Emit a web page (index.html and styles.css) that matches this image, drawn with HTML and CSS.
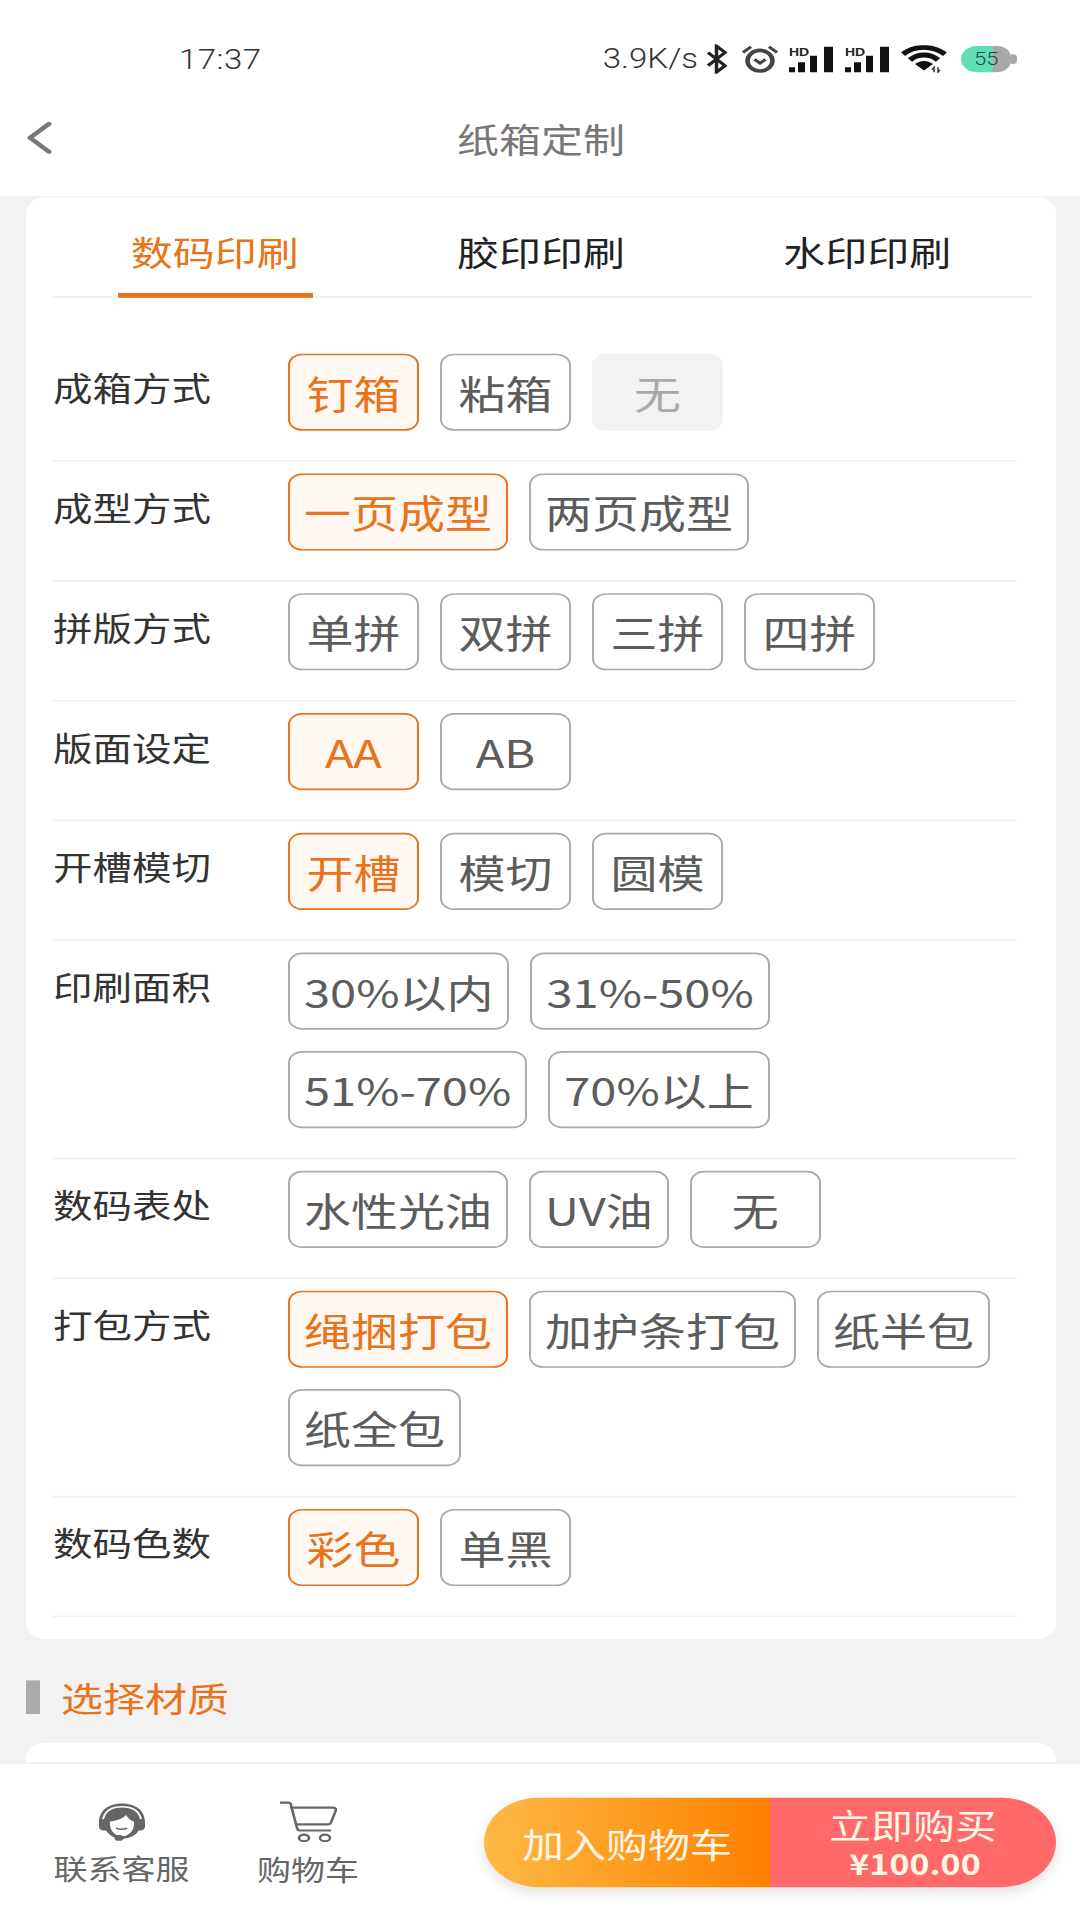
FILE: index.html
```html
<!DOCTYPE html>
<html lang="zh-CN">
<head>
<meta charset="utf-8">
<title>纸箱定制</title>
<link rel="stylesheet" href="styles.css">
</head>
<body>
<div class="frame">
<div class="stage">
  <header class="header">
    <div class="status">
      <span class="time">17:37</span>
      <div class="status-right">
        <span class="speed">3.9K/s</span>
        <svg class="ic-bt" viewBox="0 0 24 36"><path d="M3 10 20 26 11.500 34V2L20 10 3 26" fill="none" stroke="#222" stroke-width="3.500"/></svg>
        <svg class="ic-alarm" viewBox="0 0 38 34"><circle cx="19" cy="19" r="12.500" fill="none" stroke="#444" stroke-width="4.500"/><path d="M13.500 17.500 19 22l5.500-4.500" fill="none" stroke="#444" stroke-width="3.500"/><path d="M2 9 10 2M36 9 28 2" stroke="#444" stroke-width="3.500"/></svg>
        <svg class="ic-sig" viewBox="0 0 46 32"><text class="hd" x="0" y="12">HD</text><path d="M0 26h6v6H0zM9 20h7v12H9zM21 12h7v20h-7zM35 1h9v31h-9z" fill="#111"/></svg>
        <svg class="ic-sig" viewBox="0 0 46 32"><text class="hd" x="0" y="12">HD</text><path d="M0 26h6v6H0zM9 20h7v12H9zM21 12h7v20h-7zM35 1h9v31h-9z" fill="#111"/></svg>
        <svg class="ic-wifi" viewBox="0 0 46 34"><path d="M2 11C14 0 31 0 44 11M9 18C17 10 29 10 37 18" fill="none" stroke="#111" stroke-width="6"/><path d="M14 23C20 18 26 18 32 23L23 31Z" fill="#111"/><path d="M33 33v-6l-2 3M37 27v6l2-3" fill="none" stroke="#333" stroke-width="1.500"/></svg>
        <div class="battery"><span class="batt-body">55</span><span class="batt-tip"></span></div>
      </div>
    </div>
    <div class="nav">
      <svg class="back" viewBox="0 0 26 40"><path d="M23 3 4 20l19 17" fill="none" stroke="#777" stroke-width="5" stroke-linecap="round" stroke-linejoin="round"/></svg>
      <span class="title">纸箱定制</span>
    </div>
  </header>

  <main class="content">
    <section class="card">
      <div class="tabs">
        <div class="tab tab-on">数码印刷</div>
        <div class="tab">胶印印刷</div>
        <div class="tab">水印印刷</div>
      </div>
      <div class="rows">
        <div class="row"><div class="label">成箱方式</div><div class="opts"><span class="opt on">钉箱</span><span class="opt">粘箱</span><span class="opt off">无</span></div></div>
        <div class="row"><div class="label">成型方式</div><div class="opts"><span class="opt on">一页成型</span><span class="opt">两页成型</span></div></div>
        <div class="row"><div class="label">拼版方式</div><div class="opts"><span class="opt">单拼</span><span class="opt">双拼</span><span class="opt">三拼</span><span class="opt">四拼</span></div></div>
        <div class="row"><div class="label">版面设定</div><div class="opts"><span class="opt on">AA</span><span class="opt">AB</span></div></div>
        <div class="row"><div class="label">开槽模切</div><div class="opts"><span class="opt on">开槽</span><span class="opt">模切</span><span class="opt">圆模</span></div></div>
        <div class="row"><div class="label">印刷面积</div><div class="opts"><span class="opt">30%以内</span><span class="opt">31%-50%</span><span class="opt">51%-70%</span><span class="opt">70%以上</span></div></div>
        <div class="row"><div class="label">数码表处</div><div class="opts"><span class="opt">水性光油</span><span class="opt">UV油</span><span class="opt">无</span></div></div>
        <div class="row"><div class="label">打包方式</div><div class="opts"><span class="opt on">绳捆打包</span><span class="opt">加护条打包</span><span class="opt">纸半包</span><span class="opt">纸全包</span></div></div>
        <div class="row"><div class="label">数码色数</div><div class="opts"><span class="opt on">彩色</span><span class="opt">单黑</span></div></div>
      </div>
    </section>
    <div class="section-head"><span class="bar"></span><span class="section-title">选择材质</span></div>
    <section class="card card-next"></section>
  </main>

  <footer class="footer">
    <div class="foot-link foot-service">
      <svg class="ic-head" viewBox="0 0 50 47">
        <path d="M2 24C2 9 12 1 25 1s23 8 23 23v5c0 3-2 5-5 5h-2C38 40 32 44 25 44S12 40 9 34H7c-3 0-5-2-5-5Z" fill="#666"/>
        <path d="M6 20C8 10 15 5 25 5s17 5 19 15" fill="none" stroke="#fff" stroke-width="2"/>
        <path d="M13 23c6-1 12-3 16-8 2 4 5 7 8 8 1 9-4 18-12 18S12 32 13 23Z" fill="#fff"/>
        <path d="M19 31c3 2 8 2 11 0" fill="none" stroke="#666" stroke-width="1.800"/>
        <path d="M41 33c-2 6-8 9-17 10" fill="none" stroke="#666" stroke-width="2"/>
        <ellipse cx="22" cy="43" rx="4.500" ry="3.500" fill="#666"/>
      </svg>
      <span class="foot-label">联系客服</span>
    </div>
    <div class="foot-link foot-cart">
      <svg class="ic-cart" viewBox="0 0 58 50">
        <path d="M1 2h8c2 0 3 1 3 3l6 28c.4 2 1.500 3 3 3h31" fill="none" stroke="#666" stroke-width="2.600"/>
        <path d="M11 8h43c2 0 3 1 3 3l-5 15c-.5 2-1.500 2.500-3 2.500H17" fill="none" stroke="#666" stroke-width="2.600"/>
        <ellipse cx="25" cy="45" rx="5" ry="4" fill="none" stroke="#666" stroke-width="2.600"/>
        <ellipse cx="46" cy="45" rx="5" ry="4" fill="none" stroke="#666" stroke-width="2.600"/>
      </svg>
      <span class="foot-label">购物车</span>
    </div>
    <div class="actions">
      <div class="act act-cart">加入购物车</div>
      <div class="act act-buy"><span class="buy-text">立即购买</span><span class="buy-price">¥100.00</span></div>
    </div>
  </footer>
</div>
</div>
</body>
</html>
```

FILE: styles.css
```css
* { box-sizing: border-box; }
html, body { margin: 0; height: 1920px; overflow: hidden; background: #f2f2f2; }
body { font-family: "Noto Sans CJK SC", "Noto Sans", sans-serif; }

.frame { width: 1080px; height: 1920px; overflow: hidden; }
.stage {
  width: 1080px;
  height: 2340px;
  display: flex;
  flex-direction: column;
  transform: scaleY(0.8205);
  transform-origin: 0 0;
  background: #f2f2f2;
}

.header { height: 240px; flex: none; background: #fff; border-bottom: 1px solid #eee; }
.status { height: 140px; display: flex; align-items: flex-start; justify-content: space-between; padding: 52px 60px 0 179px; }
.time { font-family: Roboto, sans-serif; font-weight: 300; font-size: 33px; line-height: 40px; color: #333; letter-spacing: 0.5px; padding-top: 1px; }
.status-right { display: flex; align-items: center; height: 40px; margin-right: 3px; }
.speed { font-family: Roboto, sans-serif; font-weight: 300; font-size: 33px; line-height: 40px; color: #333; margin-right: 7px; }
.ic-bt { width: 24px; height: 36px; margin-right: 12px; }
.ic-alarm { width: 38px; height: 34px; margin-right: 10px; }
.ic-sig { width: 46px; height: 32px; margin-right: 10px; overflow: visible; }
.ic-wifi { width: 46px; height: 34px; margin-right: 14px; }
.hd { font-family: "Liberation Sans", sans-serif; font-weight: 700; font-size: 14px; fill: #222; }
.battery { display: flex; align-items: center; height: 32px; }
.batt-body { width: 50px; height: 32px; padding-left: 13px; background: linear-gradient(90deg, #5fe0b2 64%, #a8a8a8 64%); border-radius: 16px 14px 14px 16px; font-family: Roboto, sans-serif; font-weight: 300; font-size: 22px; line-height: 32px; color: #245; white-space: nowrap; }
.batt-tip { width: 6px; height: 12px; background: #a8a8a8; border-radius: 0 4px 4px 0; }

.nav { height: 99px; display: flex; align-items: center; justify-content: center; position: relative; }
.back { position: absolute; left: 26px; top: 8px; width: 26px; height: 40px; }
.title { font-size: 42px; line-height: 60px; color: #777; margin: 0 0 44px 2px; }

.content { flex: 1; min-height: 0; overflow: hidden; padding: 0 24px 0 26px; }
.card { background: #fff; border-radius: 20px; padding: 0 24px 27px 27px; }
.tabs { display: flex; height: 123px; border-bottom: 2px solid #eee; margin-bottom: 54px; }
.tab { flex: 1; text-align: center; font-size: 42px; line-height: 60px; padding: 36px 3px 0 0; color: #222; position: relative; }
.tab-on { color: #e8731a; }
.tab-on::after { content: ""; position: absolute; left: 65px; bottom: -2px; width: 195px; height: 6px; background: #e8731a; }

.rows { margin-right: 15px; }
.row { display: flex; padding: 14px 0 36px; border-bottom: 2px solid #f0f0f0; }
.label { width: 235px; flex: none; font-size: 39.5px; line-height: 60px; padding-top: 11px; color: #333; }
.opts { flex: 1; display: flex; flex-wrap: wrap; gap: 26px 21px; }
.opt { min-width: 131px; height: 94px; padding: 0 14px; border: 2px solid #aaa; border-radius: 14px; font-size: 47px; line-height: 90px; text-align: center; color: #5c5c5c; white-space: nowrap; }
.opt.on { border-color: #e8731a; background: #fff8f2; color: #e8731a; }
.opt.off { border-color: #f2f2f2; background: #f2f2f2; color: #aaa; }

.section-head { display: flex; align-items: center; height: 126px; padding-top: 15px; }
.bar { width: 14px; height: 41px; background: #aaa; margin-right: 21px; }
.section-title { font-size: 42px; color: #e8731a; }
.card-next { height: 60px; padding: 0; }

.footer { flex: none; height: 192px; background: #fff; border-top: 2px solid #efefef; display: flex; align-items: flex-start; padding: 0 24px 0 0; }
.foot-link { display: flex; flex-direction: column; align-items: center; padding-top: 47px; }
.foot-service { width: 135px; margin-left: 54px; }
.foot-cart { width: 102px; margin-left: 68px; }
.ic-head { width: 50px; height: 47px; }
.ic-cart { width: 58px; height: 50px; margin-top: -2px; }
.foot-label { font-size: 34px; line-height: 50px; color: #666; margin-top: 8px; white-space: nowrap; }
.actions { display: flex; height: 109px; width: 572px; margin: 41px 0 0 auto; border-radius: 55px; box-shadow: 0 6px 14px rgba(0,0,0,0.12); }
.act { flex: 1; display: flex; flex-direction: column; align-items: center; justify-content: center; color: #fff6e6; }
.act-cart { background: linear-gradient(90deg, #fdb944, #ff8000); font-size: 42px; border-radius: 55px 0 0 55px; }
.act-buy { background: #ff6969; border-radius: 0 55px 55px 0; }
.buy-text { font-size: 42px; line-height: 50px; }
.buy-price { font-size: 34px; line-height: 46px; font-weight: 700; padding-left: 4px; }
```
